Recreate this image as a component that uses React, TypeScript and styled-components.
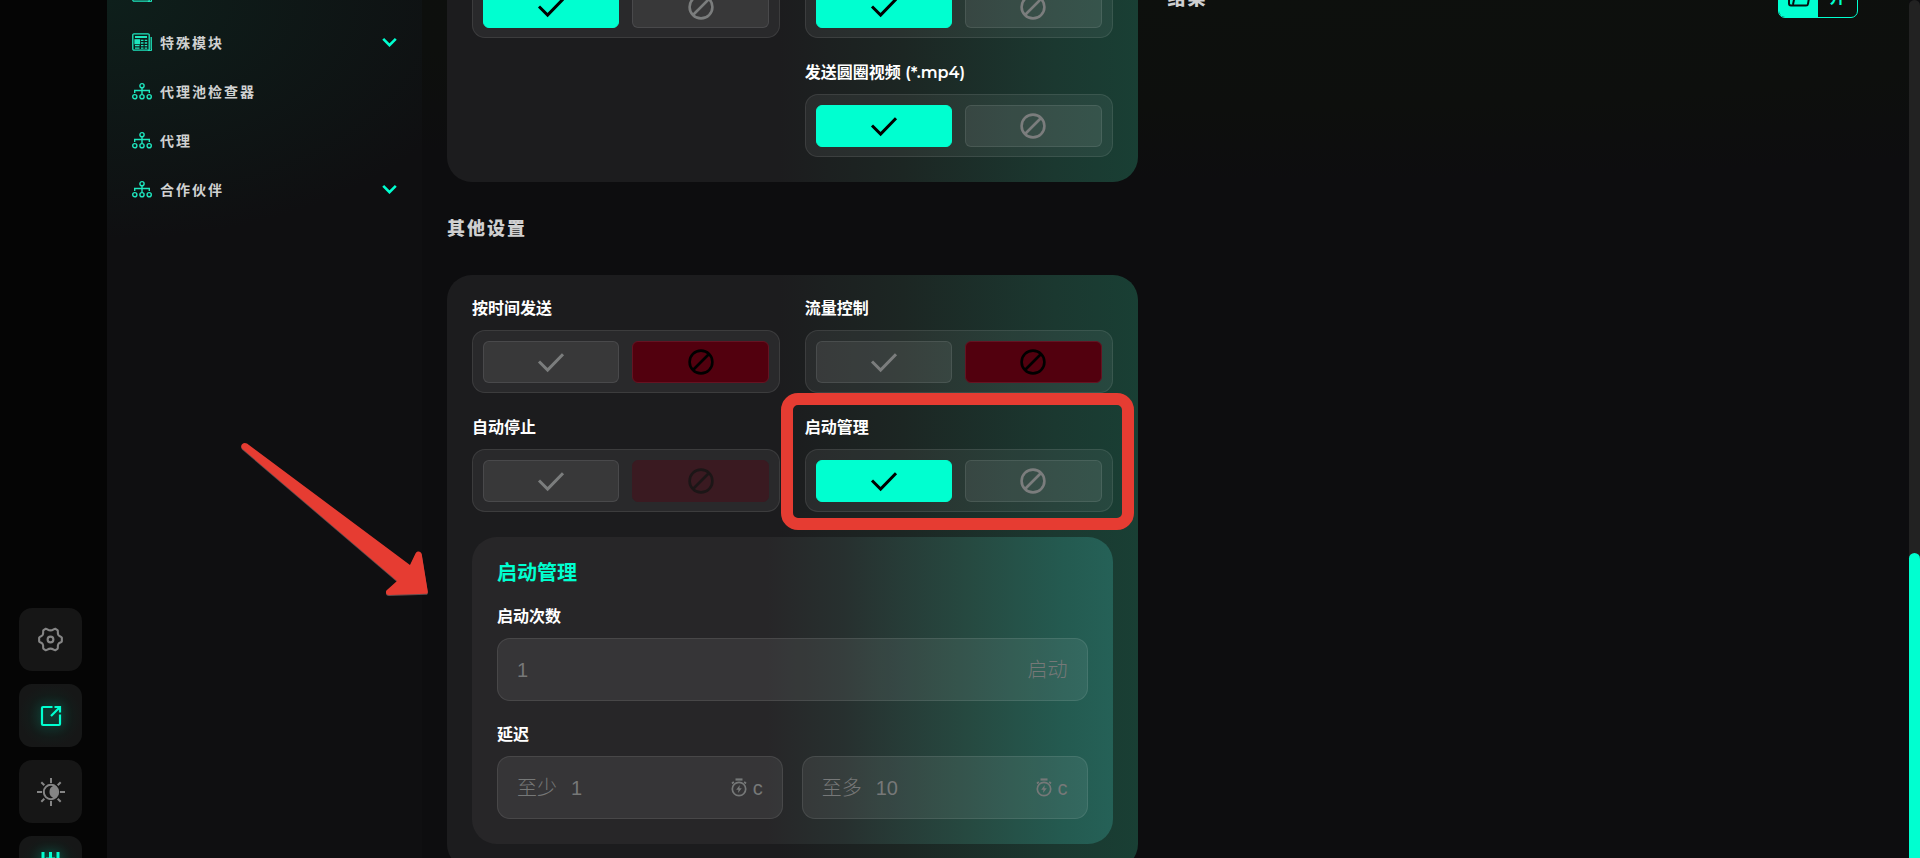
import React, { useState } from "react";
import styled, { createGlobalStyle, css } from "styled-components";

const mint = "#00ffd0";
const red = "#e63c32";
const uiFont = `Montserrat, Lato, "Noto Sans CJK SC", sans-serif`;
const plainFont = `"Liberation Sans", "Noto Sans CJK SC", sans-serif`;

const Global = createGlobalStyle`
  * { box-sizing: border-box; }
  html, body { margin: 0; height: 100%; overflow: hidden; background: #0d0d0f; }
  #root { height: 100%; }
  button, input { font: inherit; color: inherit; margin: 0; }
`;

const Page = styled.div`
  position: relative;
  display: flex;
  height: 100vh;
  overflow: hidden;
  color: #fff;
  font-family: ${uiFont};
`;

const Rail = styled.aside`
  flex: none;
  width: 107px;
  padding: 608px 0 0 19px;
  display: flex;
  flex-direction: column;
  gap: 13px;
  background: #050505;
`;

const RailButton = styled.button<{ $active?: boolean }>`
  flex: none;
  width: 63px;
  height: 63px;
  padding: 0;
  border: 0;
  border-radius: 13px;
  display: grid;
  place-items: center;
  background: ${(p) =>
    p.$active ? "radial-gradient(circle, #10241f 0, #161717 70%)" : "#161616"};
  color: ${(p) => (p.$active ? mint : "#858585")};
  ${(p) =>
    p.$active &&
    css`
      svg {
        filter: drop-shadow(0 0 6px rgba(0, 255, 208, 0.45));
      }
    `}
`;

const Sidebar = styled.nav`
  flex: none;
  width: 315px;
  overflow: hidden;
  background: radial-gradient(ellipse 400px 240px at 0 0, #0e1f1b 0, rgba(14, 26, 24, 0.7) 50%, rgba(15, 15, 17, 0) 100%), #0f0f11;
`;

const NavList = styled.ul`
  list-style: none;
  margin: -32px 0 0;
  padding: 0 25px;
`;

const NavLink = styled.a`
  display: flex;
  align-items: center;
  gap: 8px;
  height: 49px;
  color: #d0d1d1;
  text-decoration: none;
  font-size: 14px;
  font-weight: 700;
  letter-spacing: 2px;
  svg {
    flex: none;
    color: #1ee6be;
  }
  svg:last-child {
    color: ${mint};
  }
`;

const NavText = styled.span`
  flex: 1;
`;

const Main = styled.main`
  flex: 1;
  min-width: 0;
  display: grid;
  grid-template-columns: minmax(0, 1fr) minmax(0, 1fr);
  gap: 30px;
  align-items: start;
  padding: 0 51px 0 25px;
  background: radial-gradient(ellipse 1500px 180px at 55% 0, #0d100d 0, #0d0f0d 60%, rgba(13, 13, 15, 0) 100%), #0d0d0f;
`;

const Settings = styled.div`
  margin-top: -50px;
  display: flex;
  flex-direction: column;
`;

const Panel = styled.section`
  padding: 25px;
  border-radius: 25px;
  background: linear-gradient(90deg, #1c1c1e 0, #1c1c1e 48%, #1c2623 66%, #1b3830 88%, #193f34 100%);
`;

const Heading = styled.h2`
  margin: 0;
  padding-top: 2px;
  color: #cfcfd0;
  font-size: 18px;
  line-height: 91px;
  font-weight: 800;
  letter-spacing: 2px;
`;

const Grid = styled.div`
  display: grid;
  grid-template-columns: 1fr 1fr;
  gap: 26px 25px;
`;

const Field = styled.div<{ $right?: boolean }>`
  position: relative;
  grid-column: ${(p) => (p.$right ? 2 : "auto")};
  display: flex;
  flex-direction: column;
  gap: 13px;
  min-width: 0;
`;

const Label = styled.label`
  font-size: 16px;
  line-height: 17px;
  font-weight: 600;
  white-space: nowrap;
`;

const Switcher = styled.div`
  display: flex;
  gap: 13px;
  height: 63px;
  padding: 10px 10px 9px;
  border: 1px solid rgba(255, 255, 255, 0.09);
  border-radius: 13px;
  background: rgba(255, 255, 255, 0.06);
`;

type Tone = "idle" | "on" | "off" | "locked";

const tones: Record<Tone, ReturnType<typeof css>> = {
  idle: css`
    background: rgba(255, 255, 255, 0.07);
    border-color: rgba(255, 255, 255, 0.09);
    color: #7b7d7d;
  `,
  on: css`
    background: ${mint};
    border-color: ${mint};
    color: #000;
  `,
  off: css`
    background: #52000e;
    border-color: #651322;
    color: #000;
  `,
  locked: css`
    background: #3a1a21;
    border-color: #3a1a21;
    color: #1c1617;
  `,
};

const Choice = styled.button<{ $tone: Tone }>`
  flex: 1;
  height: 42px;
  padding: 0;
  border: 1px solid;
  border-radius: 6px;
  display: grid;
  place-items: center;
  ${(p) => tones[p.$tone]}
`;

const SubPanel = styled.section`
  margin-top: 25px;
  padding: 25px;
  border-radius: 25px;
  display: flex;
  flex-direction: column;
  background: linear-gradient(90deg, #272628 0, #272628 46%, #27302f 58%, #264a41 78%, #245a50 92%, #256157 100%);
`;

const SubTitle = styled.h3`
  margin: 0 0 24px;
  color: ${mint};
  font-size: 20px;
  line-height: 22px;
  font-weight: 700;
`;

const Stack = styled.div`
  display: flex;
  flex-direction: column;
  gap: 25px;
`;

const Pair = styled.div`
  display: grid;
  grid-template-columns: minmax(0, 1fr) minmax(0, 1fr);
  gap: 19px;
`;

const InputBox = styled.div`
  display: flex;
  align-items: center;
  gap: 14px;
  height: 63px;
  padding: 0 19px;
  border: 1px solid rgba(255, 255, 255, 0.09);
  border-radius: 13px;
  background: rgba(255, 255, 255, 0.07);
  color: #767878;
  font-family: ${plainFont};
  font-size: 20px;
  line-height: 24px;
  font-weight: 300;
`;

const TextInput = styled.input`
  flex: 1;
  min-width: 0;
  padding: 0;
  border: 0;
  outline: 0;
  background: none;
`;

const Unit = styled.span`
  display: flex;
  align-items: center;
  gap: 6px;
`;

const Results = styled.section`
  display: flex;
  justify-content: space-between;
  margin-top: -18px;
`;

const ResultsTitle = styled.h2`
  margin: 0;
  font-size: 18px;
  line-height: 34px;
  font-weight: 800;
  letter-spacing: 2px;
  color: #cfcfd0;
`;

const ViewSwitch = styled.div`
  display: flex;
  width: 80px;
  height: 36px;
  border: 1px solid ${mint};
  border-radius: 7px;
  overflow: hidden;
`;

const ViewButton = styled.button<{ $active?: boolean }>`
  flex: 1;
  padding: 0 0 4px;
  border: 0;
  display: grid;
  place-items: center;
  font-size: 16px;
  line-height: 20px;
  font-weight: 700;
  background: ${(p) => (p.$active ? mint : "transparent")};
  color: ${(p) => (p.$active ? "#07110f" : mint)};
`;

const ScrollTrack = styled.div`
  flex: none;
  width: 11px;
  padding-top: 553px;
  display: flex;
  border-radius: 6px 6px 0 0;
  background: #222;
`;

const ScrollThumb = styled.div`
  flex: 1;
  border-radius: 6px 6px 0 0;
  background: ${mint};
`;

const Highlight = styled.div`
  position: absolute;
  inset: -26px -21px -18px -24px;
  border: 12px solid ${red};
  border-radius: 17px;
  pointer-events: none;
`;

const Pointer = styled.svg`
  position: absolute;
  left: 220px;
  top: 420px;
  filter: drop-shadow(0 1px 0 rgba(150, 120, 120, 0.6));
  pointer-events: none;
`;

const CheckIcon = () => (
  <svg width="28" height="24" viewBox="0 0 28 24" fill="none" stroke="currentColor" strokeWidth="3">
    <path d="M2 11.5 10.6 20 26 4.2" />
  </svg>
);

const BanIcon = () => (
  <svg width="28" height="28" viewBox="0 0 28 28" fill="none" stroke="currentColor" strokeWidth="2.6">
    <circle cx="14" cy="14" r="11.4" />
    <path d="M22 6 6 22" />
  </svg>
);

const Chevron = () => (
  <svg width="15" height="10" viewBox="0 0 15 10" fill="none" stroke="currentColor" strokeWidth="2.6">
    <path d="M1.2 1.9 7.5 8.200 13.8 1.9" />
  </svg>
);

const NewsIcon = () => (
  <svg width="20" height="18" viewBox="0 0 20 18" fill="none" stroke="currentColor" strokeWidth="1.3">
    <path d="M2 .8h14a1.200 1.200 0 0 1 1.200 1.200v15.200H2A1.200 1.200 0 0 1 .8 16V2A1.200 1.200 0 0 1 2 .8ZM19.200 4V15.700a1.500 1.500 0 0 1-3 1.500" />
    <path d="M3 4h12" strokeWidth="2" />
    <path d="M3 6.800h4.500v3.800H3z" fill="currentColor" />
    <path d="M9 7.300h2.500M12.700 7.300h2.500M9 10h2.500M12.700 10h2.500M3 12.700h4.500M9 12.700h2.500M12.700 12.700h2.500M3 15.200h4.500M9 15.200h2.500M12.700 15.200h2.500" />
  </svg>
);

const TreeIcon = () => (
  <svg width="20" height="18" viewBox="0 0 20 18" fill="none" stroke="currentColor" strokeWidth="1.400">
    <circle cx="10" cy="3.700" r="2.100" />
    <circle cx="2.800" cy="14.700" r="2.100" />
    <circle cx="10" cy="14.700" r="2.100" />
    <circle cx="17.200" cy="14.700" r="2.100" />
    <path d="M10 5.700V12.600M2.700 11V8.500H17.300V11" />
  </svg>
);

const GearIcon = () => (
  <svg width="25" height="25" viewBox="0 0 26 26" fill="none" stroke="currentColor" strokeWidth="2.200" strokeLinejoin="round">
    <path d="M7.800 1.900C9.300 1.300 10 3.500 13 3.500S16.700 1.300 18.200 1.900L20.200 3.200C21.400 4.300 19.800 5.800 21.200 8.300C22.300 10 24.500 9.700 24.800 11.200V14.800C24.500 16.300 22.300 16 21.200 17.700C19.800 20.200 21.400 21.700 20.200 22.800L18.200 24.100C16.700 24.700 16 22.500 13 22.500S9.300 24.700 7.800 24.100L5.800 22.800C4.600 21.700 6.200 20.200 4.800 17.700C3.700 16 1.500 16.300 1.200 14.800V11.200C1.500 9.700 3.700 10 4.800 8.300C6.200 5.800 4.600 4.300 5.800 3.200Z" />
    <circle cx="13" cy="13" r="3" />
  </svg>
);

const ShareIcon = () => (
  <svg width="22" height="22" viewBox="0 0 22 22" fill="none" stroke="currentColor" strokeWidth="2.200">
    <path d="M12.500 2H3a1 1 0 0 0-1 1v16a1 1 0 0 0 1 1h16a1 1 0 0 0 1-1V9.500M11 11l9-9M14.500 2H20v5.500" />
  </svg>
);

const SunIcon = () => (
  <svg width="28" height="28" viewBox="0 0 28 28" fill="none" stroke="currentColor" strokeWidth="2">
    <circle cx="14" cy="14" r="7.200" />
    <path d="M17 8.800a5.600 5.600 0 0 0 0 10.400a6 6 0 0 0 0-10.400Z" fill="currentColor" />
    <path d="M14 0v5M14 23v5M0 14h5M23 14h5M4.300 4.300l3 3M20.700 20.700l3 3M4.300 23.700l3-3M20.700 7.300l3-3" />
  </svg>
);

const SlidersIcon = () => (
  <svg width="19" height="31" viewBox="0 0 19 31" fill="none" stroke="currentColor" strokeWidth="3">
    <path d="M2 0v20M9.500 0v31M17 0v20M2 24v7M17 24v7M5 7h9" />
  </svg>
);

const FolderIcon = () => (
  <svg width="24" height="20" viewBox="0 0 24 20" fill="none" stroke="currentColor" strokeWidth="2" strokeLinejoin="round">
    <path d="M2 14.500V3a1.500 1.500 0 0 1 1.500-1.500H8l2 2.500H20V7M4 17.500a2 2 0 0 1-2-2V6M6 16.500 8 7H22.500L21 15.800a2 2 0 0 1-2 1.700H4" />
  </svg>
);

const TimerIcon = () => (
  <svg width="16" height="20" viewBox="0 0 16 20" fill="none" stroke="currentColor" strokeWidth="1.700">
    <path d="M4.500 1.500h7" strokeWidth="2.200" />
    <path d="M1 5.500 2.800 3.900M15 5.500 13.200 3.900" />
    <circle cx="8" cy="11" r="6.700" />
    <path d="M8.800 7 5.200 11.700H7.500L7 15 10.800 10.300H8.400Z" fill="currentColor" stroke="none" />
  </svg>
);

type ToggleProps = {
  label?: string;
  initial?: boolean;
  locked?: boolean;
  right?: boolean;
  children?: React.ReactNode;
};

function Toggle({ label, initial = false, locked, right, children }: ToggleProps) {
  const [on, setOn] = useState(initial);
  return (
    <Field $right={right} role="group" aria-label={label}>
      {label && <Label as="span">{label}</Label>}
      <Switcher>
        <Choice
          type="button"
          aria-label="开启"
          aria-pressed={on}
          disabled={locked}
          $tone={on ? "on" : "idle"}
          onClick={() => setOn(true)}
        >
          <CheckIcon />
        </Choice>
        <Choice
          type="button"
          aria-label="关闭"
          aria-pressed={!on}
          disabled={locked}
          $tone={on ? "idle" : locked ? "locked" : "off"}
          onClick={() => setOn(false)}
        >
          <BanIcon />
        </Choice>
      </Switcher>
      {children}
    </Field>
  );
}

const navItems = [
  { text: "", icon: <NewsIcon />, more: false },
  { text: "特殊模块", icon: <NewsIcon />, more: true },
  { text: "代理池检查器", icon: <TreeIcon />, more: false },
  { text: "代理", icon: <TreeIcon />, more: false },
  { text: "合作伙伴", icon: <TreeIcon />, more: true },
];

export default function App() {
  return (
    <>
      <Global />
      <Page>
        <Rail>
          <RailButton type="button" aria-label="设置"><GearIcon /></RailButton>
          <RailButton type="button" aria-label="打开" $active><ShareIcon /></RailButton>
          <RailButton type="button" aria-label="主题"><SunIcon /></RailButton>
          <RailButton type="button" aria-label="调节" $active><SlidersIcon /></RailButton>
        </Rail>

        <Sidebar>
          <NavList>
            {navItems.map((item, i) => (
              <li key={i}>
                <NavLink href="#">
                  {item.icon}
                  <NavText>{item.text}</NavText>
                  {item.more && <Chevron />}
                </NavLink>
              </li>
            ))}
          </NavList>
        </Sidebar>

        <Main>
          <Settings>
            <Panel>
              <Grid>
                <Toggle initial />
                <Toggle initial />
                <Toggle label="发送圆圈视频 (*.mp4)" initial right />
              </Grid>
            </Panel>

            <Heading>其他设置</Heading>

            <Panel>
              <Grid>
                <Toggle label="按时间发送" />
                <Toggle label="流量控制" />
                <Toggle label="自动停止" locked />
                <Toggle label="启动管理" initial>
                  <Highlight />
                </Toggle>
              </Grid>

              <SubPanel>
                <SubTitle>启动管理</SubTitle>
                <Stack>
                  <Field>
                    <Label htmlFor="launches">启动次数</Label>
                    <InputBox>
                      <TextInput id="launches" defaultValue="1" />
                      <Unit>启动</Unit>
                    </InputBox>
                  </Field>
                  <Field>
                    <Label htmlFor="delay-min">延迟</Label>
                    <Pair>
                      <InputBox>
                        <label htmlFor="delay-min">至少</label>
                        <TextInput id="delay-min" defaultValue="1" />
                        <Unit><TimerIcon />c</Unit>
                      </InputBox>
                      <InputBox>
                        <label htmlFor="delay-max">至多</label>
                        <TextInput id="delay-max" defaultValue="10" />
                        <Unit><TimerIcon />c</Unit>
                      </InputBox>
                    </Pair>
                  </Field>
                </Stack>
              </SubPanel>
            </Panel>
          </Settings>

          <Results>
            <ResultsTitle>结果</ResultsTitle>
            <ViewSwitch>
              <ViewButton type="button" aria-label="文件夹" $active><FolderIcon /></ViewButton>
              <ViewButton type="button">开</ViewButton>
            </ViewSwitch>
          </Results>
        </Main>

        <ScrollTrack>
          <ScrollThumb />
        </ScrollTrack>

        <Pointer width="240" height="200" viewBox="0 0 240 200">
          <path
            fill={red}
            d="M22 28.500C19.500 25 23.500 21.500 27 23.500L190 145L195.500 133.500C197 130.500 201 131 201.700 134L207.800 171.500C208 173 207 173.800 206 173.800L169 175C165.500 175 165 171 167.500 169.500L177 161Z"
          />
        </Pointer>
      </Page>
    </>
  );
}
